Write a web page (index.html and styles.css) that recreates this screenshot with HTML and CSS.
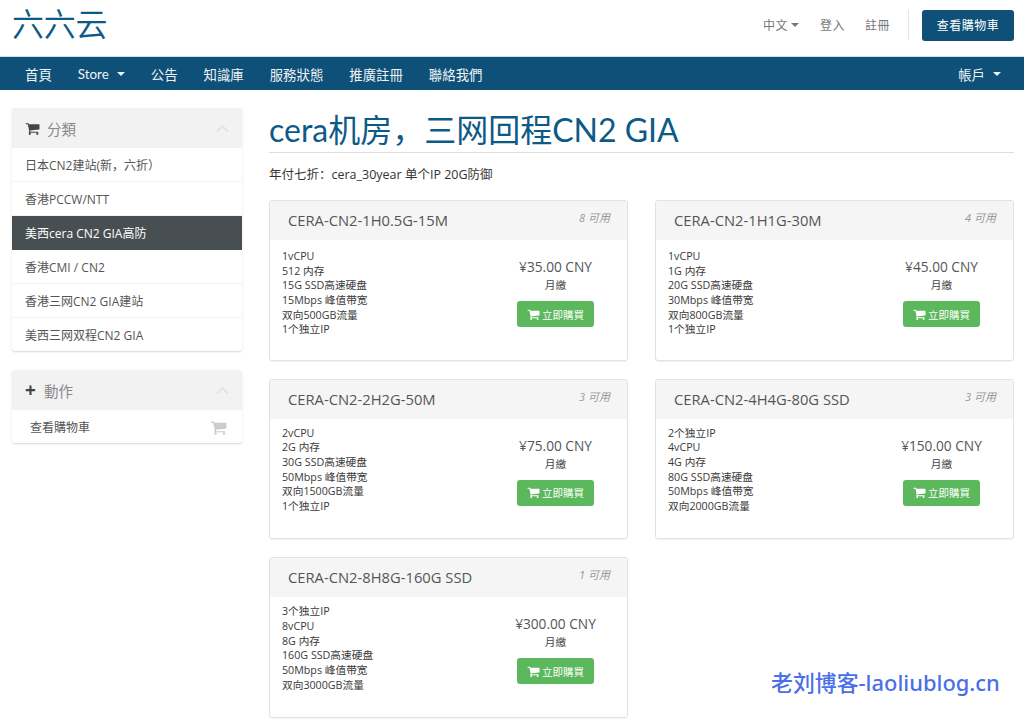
FILE: index.html
```html
<!DOCTYPE html>
<html lang="zh">
<head>
<meta charset="utf-8">
<title>六六云</title>
<link rel="stylesheet" href="styles.css">
</head>
<body>
<svg class="defs" width="0" height="0" aria-hidden="true">
  <symbol id="cart" viewBox="0 0 1792 1792"><path d="M704 1536q0 52-38 90t-90 38-90-38-38-90 38-90 90-38 90 38 38 90zm896 0q0 52-38 90t-90 38-90-38-38-90 38-90 90-38 90 38 38 90zm128-1088v512q0 24-16.5 42.5t-40.5 21.5l-1044 122q13 60 13 70 0 16-24 64h920q26 0 45 19t19 45-19 45-45 19h-1024q-26 0-45-19t-19-45q0-11 8-31.5t16-36 21.5-40 15.5-29.5l-177-823h-204q-26 0-45-19t-19-45 19-45 45-19h256q16 0 28.5 6.5t19.5 15.5 13 24.5 8 26 5.5 29.5 4.5 26h1201q26 0 45 19t19 45z"/></symbol>
  <symbol id="chev" viewBox="0 0 16 10"><path d="M1.5 8.5 8 2l6.500 6.500" fill="none" stroke="currentColor" stroke-width="2.200"/></symbol>
</svg>
<header class="top">
  <a class="logo">六六云</a>
  <div class="top-links">
    <a class="top-link">中文<i class="caret"></i></a>
    <a class="top-link">登入</a>
    <a class="top-link">註冊</a>
    <span class="top-sep"></span>
    <a class="top-btn">查看購物車</a>
  </div>
</header>
<nav class="nav">
  <a>首頁</a>
  <a>Store<i class="caret nav-caret"></i></a>
  <a>公告</a>
  <a>知識庫</a>
  <a>服務狀態</a>
  <a>推廣註冊</a>
  <a>聯絡我們</a>
  <a class="nav-right">帳戶<i class="caret nav-caret"></i></a>
</nav>
<div class="page">
  <aside class="side">
    <section class="panel">
      <div class="panel-head">
        <svg class="head-icon"><use href="#cart"/></svg><span>分類</span>
        <svg class="chev"><use href="#chev"/></svg>
      </div>
      <a class="item">日本CN2建站(新，六折）</a>
      <a class="item">香港PCCW/NTT</a>
      <a class="item active">美西cera CN2 GIA高防</a>
      <a class="item">香港CMI / CN2</a>
      <a class="item">香港三网CN2 GIA建站</a>
      <a class="item">美西三网双程CN2 GIA</a>
    </section>
    <section class="panel">
      <div class="panel-head">
        <b class="plus">+</b><span>動作</span>
        <svg class="chev"><use href="#chev"/></svg>
      </div>
      <a class="item action">查看購物車<svg class="item-icon"><use href="#cart"/></svg></a>
    </section>
  </aside>
  <main class="main">
    <h1 class="title">cera机房，三网回程CN2 GIA</h1>
    <p class="lead">年付七折：cera_30year 单个IP 20G防御</p>
    <div class="grid">
      <article class="card">
        <div class="card-head"><h2>CERA-CN2-1H0.5G-15M</h2><em>8 可用</em></div>
        <div class="card-body">
          <div class="spec">1vCPU<br>512 内存<br>15G SSD高速硬盘<br>15Mbps 峰值带宽<br>双向500GB流量<br>1个独立IP</div>
          <div class="buy"><div class="price">¥35.00 CNY</div><div class="cycle">月繳</div><a class="btn"><svg><use href="#cart"/></svg>立即購買</a></div>
        </div>
      </article>
      <article class="card">
        <div class="card-head"><h2>CERA-CN2-1H1G-30M</h2><em>4 可用</em></div>
        <div class="card-body">
          <div class="spec">1vCPU<br>1G 内存<br>20G SSD高速硬盘<br>30Mbps 峰值带宽<br>双向800GB流量<br>1个独立IP</div>
          <div class="buy"><div class="price">¥45.00 CNY</div><div class="cycle">月繳</div><a class="btn"><svg><use href="#cart"/></svg>立即購買</a></div>
        </div>
      </article>
      <article class="card">
        <div class="card-head"><h2>CERA-CN2-2H2G-50M</h2><em>3 可用</em></div>
        <div class="card-body">
          <div class="spec">2vCPU<br>2G 内存<br>30G SSD高速硬盘<br>50Mbps 峰值带宽<br>双向1500GB流量<br>1个独立IP</div>
          <div class="buy"><div class="price">¥75.00 CNY</div><div class="cycle">月繳</div><a class="btn"><svg><use href="#cart"/></svg>立即購買</a></div>
        </div>
      </article>
      <article class="card">
        <div class="card-head"><h2>CERA-CN2-4H4G-80G SSD</h2><em>3 可用</em></div>
        <div class="card-body">
          <div class="spec">2个独立IP<br>4vCPU<br>4G 内存<br>80G SSD高速硬盘<br>50Mbps 峰值带宽<br>双向2000GB流量</div>
          <div class="buy"><div class="price">¥150.00 CNY</div><div class="cycle">月繳</div><a class="btn"><svg><use href="#cart"/></svg>立即購買</a></div>
        </div>
      </article>
      <article class="card">
        <div class="card-head"><h2>CERA-CN2-8H8G-160G SSD</h2><em>1 可用</em></div>
        <div class="card-body">
          <div class="spec">3个独立IP<br>8vCPU<br>8G 内存<br>160G SSD高速硬盘<br>50Mbps 峰值带宽<br>双向3000GB流量</div>
          <div class="buy"><div class="price">¥300.00 CNY</div><div class="cycle">月繳</div><a class="btn"><svg><use href="#cart"/></svg>立即購買</a></div>
        </div>
      </article>
    </div>
  </main>
</div>
<div class="watermark">老刘博客-laoliublog.cn</div>
</body>
</html>
```
FILE: styles.css
```css
* { box-sizing: border-box; }
html, body { margin: 0; height: 720px; overflow: hidden; background: #fff; }
body {
  position: relative;
  font-family: "Open Sans", "Noto Sans CJK SC", sans-serif;
  font-size: 12px;
  color: #333;
}
.defs { position: absolute; }
.top {
  height: 57px;
  display: flex;
  align-items: center;
  justify-content: space-between;
  padding: 0 10px 0 12px;
  border-bottom: 1px solid #d5dde2;
}
.logo {
  font-family: "Noto Sans CJK SC", sans-serif;
  font-weight: 350;
  font-size: 32px;
  line-height: 50px;
  color: #0e5a86;
  margin-top: -12px;
  letter-spacing: -0.300px;
}
.top-links { display: flex; align-items: center; height: 40px; margin-top: -6px; }
.top-link { color: #777; font-size: 12px; letter-spacing: 0.500px; margin-right: 20px; display: flex; align-items: center; }
.top-link:first-child { margin-right: 21px; }
.top-link:nth-child(3) { margin-right: 18px; }
.top-sep { width: 1px; height: 30px; background: #e5e5e5; margin-right: 13px; }
.top-btn {
  width: 92px;
  height: 31px;
  background: #0e5077;
  color: #fff;
  border-radius: 3px;
  font-size: 12px;
  letter-spacing: 0.500px;
  display: flex;
  align-items: center;
  justify-content: center;
}
.caret {
  display: inline-block;
  width: 0;
  height: 0;
  margin-left: 3px;
  border-top: 4px solid currentColor;
  border-left: 4px solid transparent;
  border-right: 4px solid transparent;
}
.nav {
  height: 33px;
  background: #0e5077;
  display: flex;
  align-items: center;
  padding: 0 23px 0 25px;
  color: #eef3f6;
  font-family: "Lato", "Noto Sans CJK SC", sans-serif;
  font-size: 13.400px;
  gap: 26px;
}
.nav a { display: flex; align-items: center; white-space: nowrap; }
.nav-caret { margin-left: 8px; }
.nav-right { margin-left: auto; }
.page { display: flex; padding: 18px 10px 0 12px; gap: 27px; align-items: flex-start; }
.side { width: 230px; flex: none; display: flex; flex-direction: column; gap: 19px; }
.panel {
  background: #fff;
  border-radius: 3px;
  box-shadow: 0 1px 2px rgba(0, 0, 0, 0.160);
  overflow: hidden;
}
.panel-head {
  height: 40px;
  background: #f2f2f2;
  display: flex;
  align-items: center;
  padding: 0 13px;
  font-size: 14.500px;
  color: #888;
}
.head-icon { width: 15px; height: 15px; fill: #444; margin-right: 7px; }
.plus { font-size: 19px; font-weight: 700; color: #444; width: 13px; margin-right: 6px; line-height: 1; }
.chev { width: 13px; height: 9px; margin-left: auto; color: #e2e2e2; }
.item {
  height: 34px;
  display: flex;
  align-items: center;
  padding: 0 13px;
  font-size: 12px;
  color: #555;
  border-bottom: 1px solid #f3f3f3;
}
.item:last-child { border-bottom: 0; height: 33px; }
.item.active { background: #474f52; color: #fff; border-bottom: 0; }
.item.action { padding: 1px 15px 0 18px; justify-content: space-between; }
.item-icon { width: 17px; height: 17px; fill: #ccc; }
.main { width: 745px; flex: none; }
.title {
  margin: 0;
  height: 45px;
  font-family: "Lato", "Noto Sans CJK SC", sans-serif;
  font-weight: 400;
  font-size: 32px;
  line-height: 44px;
  color: #0e5a86;
  border-bottom: 1px solid #ddd;
  white-space: nowrap;
}
.lead { margin: 14px 0 0; font-size: 12.500px; line-height: 16px; }
.grid {
  margin-top: 17px;
  display: grid;
  grid-template-columns: 359px 359px;
  gap: 18px 27px;
  grid-auto-rows: 160.600px;
}
.card { border: 1px solid #e2e2e2; border-radius: 3px; box-shadow: 0 1px 1px rgba(0, 0, 0, 0.050); overflow: hidden; }
.card-head {
  height: 39px;
  background: #f5f5f5;
  display: flex;
  justify-content: space-between;
  padding: 0 17px 0 18px;
}
.card-head h2 { margin: 0; font-size: 14.750px; font-weight: 400; line-height: 38px; color: #555; }
.card-head em { font-size: 11px; line-height: 34px; color: #999; }
.card-body { display: flex; padding: 9px 12px 0; justify-content: space-between; }
.spec { font-size: 10.700px; line-height: 14.670px; color: #3a3a3a; white-space: nowrap; }
.card:nth-child(n+3) .spec { margin-top: -2px; }
.buy { width: 119px; padding-top: 9px; display: flex; flex-direction: column; align-items: center; }
.price { font-size: 13.700px; line-height: 18px; color: #555; white-space: nowrap; }
.cycle { font-size: 10.700px; line-height: 16px; color: #444; margin-top: 1px; }
.btn {
  margin-top: 8px;
  width: 77px;
  height: 26px;
  background: #5cb85c;
  border-radius: 3px;
  color: #fff;
  font-size: 10.500px;
  display: flex;
  align-items: center;
  justify-content: center;
}
.btn svg { width: 13px; height: 13px; fill: #fff; margin-right: 2px; }
.watermark {
  position: absolute;
  left: 771px;
  top: 670px;
  font-family: "Noto Sans", "Noto Sans CJK SC", sans-serif;
  font-size: 21.900px;
  line-height: 26px;
  font-weight: 500;
  color: #4a6fe8;
  white-space: nowrap;
}
```
